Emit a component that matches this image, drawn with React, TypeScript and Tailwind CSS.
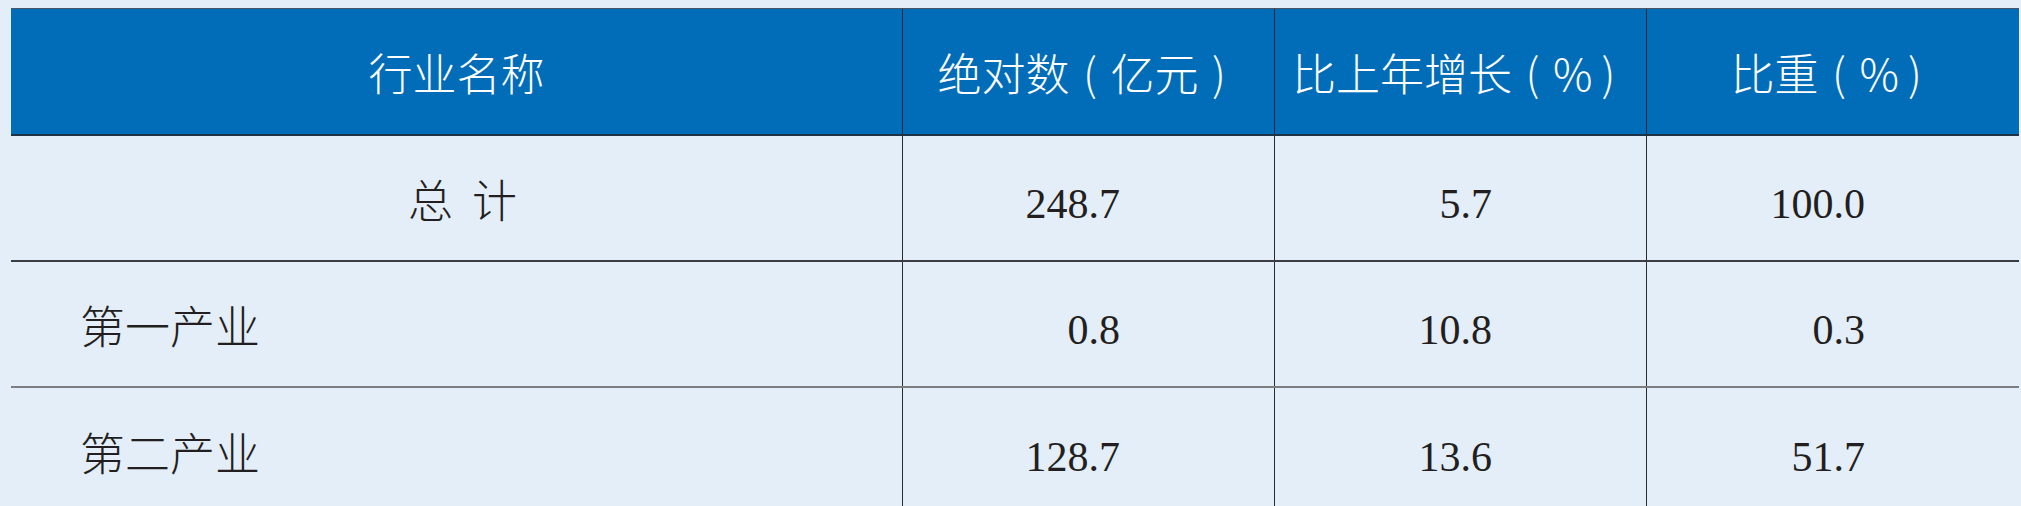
const HEADERS = ["行业名称", "绝对数（亿元）", "比上年增长（%）", "比重（%）"];

const ROWS = [
  { name: "总计", values: ["248.7", "5.7", "100.0"], total: true },
  { name: "第一产业", values: ["0.8", "10.8", "0.3"] },
  { name: "第二产业", values: ["128.7", "13.6", "51.7"] },
];

const cjk = "font-[family-name:'Noto_Sans_CJK_SC',sans-serif]";
const serif = "font-[family-name:'Liberation_Serif',serif]";

// full-width parens in the print sit centred in their box
function HeaderLabel({ text }: { text: string }) {
  return (
    <>
      {text.split(/([（）%])/).filter(Boolean).map((part, i) =>
        part === "（" || part === "）" ? (
          <span key={i} className="inline-block w-[41px] text-center">
            {part === "（" ? "(" : ")"}
          </span>
        ) : part === "%" ? (
          <span key={i} className="inline-block w-[35px] text-center">
            %
          </span>
        ) : (
          <span key={i}>{part}</span>
        )
      )}
    </>
  );
}

export default function App() {
  return (
    <div className="h-[506px] w-full overflow-hidden bg-[#e4eef8] pl-[11px] pt-[8px]">
      <div className="w-[2008px]">
        {/* Header */}
        <div className="grid h-[128px] grid-cols-[892px_372px_372px_372px] border-t border-b-2 border-t-[#4b5563] border-b-[#1f3347] bg-[#016db9]">
          {HEADERS.map((h, i) => (
            <div
              key={h}
              className={`flex items-center justify-center text-[44px] font-light leading-none text-white ${cjk} ${
                i < 3 ? "border-r border-[#1d2a36]" : ""
              }`}
            >
              <HeaderLabel text={h} />
            </div>
          ))}
        </div>

        {/* Body */}
        {ROWS.map((row, r) => (
          <div
            key={row.name}
            className={`grid h-[126px] grid-cols-[892px_372px_372px_372px] ${
              r === 0
                ? "border-b-2 border-[#3a3d42]"
                : r === 1
                ? "border-b-2 border-[#7b7d80]"
                : ""
            }`}
          >
            <div
              className={`flex items-center border-r border-[#2b2b2b] text-[45px] font-light leading-none text-[#231f20] ${cjk} ${
                row.total ? "justify-center pl-[12px]" : "pl-[69px]"
              }`}
            >
              {row.total ? (
                <>
                  <span>总</span>
                  <span className="ml-[19px]">计</span>
                </>
              ) : (
                row.name
              )}
            </div>
            {row.values.map((v, i) => (
              <div
                key={i}
                className={`flex items-center justify-end pr-[154px] pt-[12px] text-[42px] leading-none text-[#231f20] ${serif} ${
                  i < 2 ? "border-r border-[#2b2b2b]" : ""
                }`}
              >
                {v}
              </div>
            ))}
          </div>
        ))}
      </div>
    </div>
  );
}
